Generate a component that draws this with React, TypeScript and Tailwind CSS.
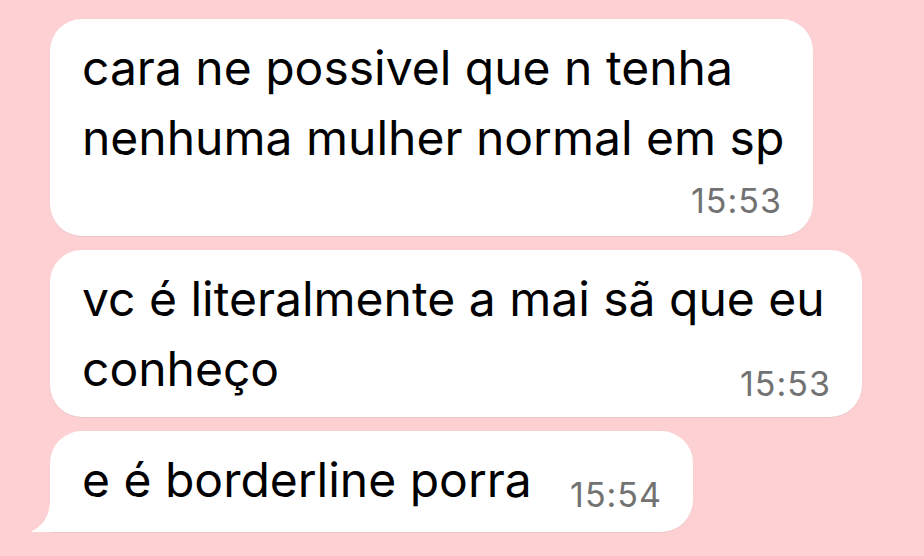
import { FC } from "react";
import clsx from "clsx";

interface Message {
	lines: string[];
	time: string;
	width: string;
	pad: string;
	stampBelow?: boolean;
	tail?: boolean;
}

const messages: Message[] = [
	{
		lines: ["cara ne possivel que n tenha", "nenhuma mulher normal em sp"],
		time: "15:53",
		width: "w-[763px]",
		pad: "pb-[15px]",
		stampBelow: true,
	},
	{
		lines: ["vc é literalmente a mai sã que eu", "conheço"],
		time: "15:53",
		width: "w-[812px]",
		pad: "pb-[13px]",
	},
	{
		lines: ["e é borderline porra"],
		time: "15:54",
		width: "w-[643px]",
		pad: "pb-[17px]",
		tail: true,
	},
];

const Stamp: FC<{ time: string; className?: string }> = ({ time, className }) => (
	<span className={clsx("text-[34px] leading-[40px] tracking-[1px] text-[#727272]", className)}>
		{time}
	</span>
);

const Bubble: FC<{ msg: Message }> = ({ msg }) => (
	<div
		className={clsx(
			"relative flow-root bg-white rounded-[32px] pl-[32px] pr-[31px] pt-[14px] shadow-[0_1px_0_rgba(0,0,0,0.06)]",
			msg.width,
			msg.pad,
			msg.tail && "rounded-bl-none"
		)}
	>
		<p className="text-[48px] leading-[70px] text-black whitespace-nowrap">
			{msg.lines.map((line, i) => (
				<span key={i}>
					{line}
					{i < msg.lines.length - 1 && <br />}
				</span>
			))}
			{!msg.stampBelow && <Stamp time={msg.time} className="float-right mt-[30px]" />}
		</p>
		{msg.stampBelow && (
			<div className="mt-[8px] text-right">
				<Stamp time={msg.time} />
			</div>
		)}
		{msg.tail && (
			<svg
				className="absolute left-[-19px] bottom-0"
				width="22"
				height="32"
				viewBox="0 0 22 32"
			>
				<path d="M19 0 C19 13 14 25 1 31 C0.5 31.4 0.7 32 1.5 32 L22 32 L22 0 Z" fill="#ffffff" />
			</svg>
		)}
	</div>
);

export default function App() {
	return (
		<div
			className="w-[924px] h-[556px] overflow-hidden bg-[#fdd1d3] pl-[50px] pt-[19px] flex flex-col items-start gap-[14px]"
			style={{ fontFamily: "Inter, 'Liberation Sans', sans-serif" }}
		>
			{messages.map((m, i) => (
				<Bubble key={i} msg={m} />
			))}
		</div>
	);
}
